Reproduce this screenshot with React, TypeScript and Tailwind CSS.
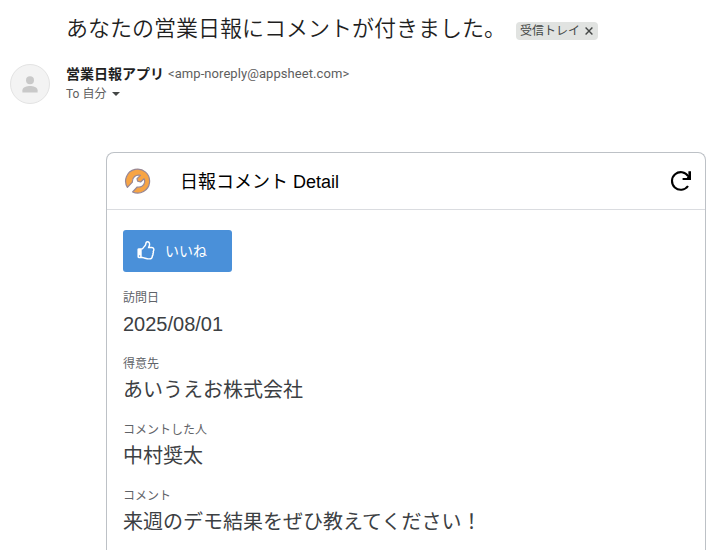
import React from "react";

interface FieldProps {
  label: string;
  value: string;
}

const fields: FieldProps[] = [
  { label: "訪問日", value: "2025/08/01" },
  { label: "得意先", value: "あいうえお株式会社" },
  { label: "コメントした人", value: "中村奨太" },
  { label: "コメント", value: "来週のデモ結果をぜひ教えてください！" },
];

const Avatar: React.FC = () => (
  <div className="flex size-10 shrink-0 items-center justify-center rounded-full border border-[#e3e3e3] bg-[#f3f3f3]">
    <svg width="16" height="17" viewBox="0 0 16 17" fill="#c9c9c9">
      <circle cx="8" cy="4.2" r="4" />
      <path d="M0.4 16.6v-2.3c0-2.9 4.6-4.2 7.6-4.2s7.6 1.3 7.6 4.2v2.3z" />
    </svg>
  </div>
);

const AppLogo: React.FC = () => (
  <svg width="28" height="28" viewBox="0 0 28 28" className="shrink-0">
    <path
      d="M3.4 20.4A12 12 0 1 1 8.6 25L13.2 20C16.6 20.8 20 18.8 20.6 15.4C20.8 14 20.6 12.8 20.1 11.8L16.6 15L13.6 14.2L13 11.6L16.4 8.4C12 7.2 8 10.4 8.4 15.2Z"
      fill="#f7a444"
      stroke="#988795"
      strokeWidth="1.2"
      strokeLinejoin="round"
    />
  </svg>
);

const ThumbsUpIcon: React.FC = () => (
  <svg
    width="20"
    height="20"
    viewBox="0 0 1792 1792"
    fill="currentColor"
    className="mr-[9px] shrink-0"
  >
    <path d="M384 1344q0-26-19-45t-45-19-45 19-19 45 19 45 45 19 45-19 19-45zm1152-576q0-51-39-89.500t-89-38.500h-352q0-58 48-159.500t48-160.500q0-98-32-145t-128-47q-26 26-38 85t-30.500 125.500-59.500 109.500q-22 23-77 91-4 5-23 30t-31.500 41-34.500 42.500-40 44-38.500 35.500-40 27-35.500 9h-32v640h32q13 0 31.500 3t33 6.500 38 11 35 11.500 35.500 12.500 29 10.500q211 73 342 73h121q192 0 192-167 0-26-5-56 30-16 47.500-52.500t17.500-73.500-18-69q53-50 53-119 0-25-10-55.500t-25-47.500q32-1 53.500-47t21.500-81zm128-1q0 89-49 163 9 33 9 69 0 77-38 144 3 21 3 43 0 101-60 178 1 139-85 219.500t-227 80.500h-129q-96 0-189.500-22.500t-216.500-65.500q-116-40-138-40h-288q-53 0-90.500-37.500t-37.500-90.500v-640q0-53 37.500-90.500t90.500-37.500h274q36-24 137-155 58-75 107-128 24-25 35.500-85.500t30.500-126.500 62-108q39-37 90-37 84 0 151 32.500t102 101.500 35 186q0 93-48 192h176q104 0 180 76t76 179z" />
  </svg>
);

const RefreshIcon: React.FC = () => (
  <svg width="22" height="22" viewBox="0 0 22 22" fill="none">
    <path
      d="M18 16A8.8 8.8 0 1 1 18.2 6.2"
      stroke="#000"
      strokeWidth="2.1"
    />
    <path d="M21 1.2v8.8h-8.4V8h4.2l1.6-3V1.2z" fill="#000" />
  </svg>
);

const Field: React.FC<FieldProps> = ({ label, value }) => (
  <div className="h-[66px]">
    <div className="text-xs leading-4 text-[#5f6368]">{label}</div>
    <div className="mt-0.5 text-xl leading-8 text-[#3c4043]">{value}</div>
  </div>
);

export default function App() {
  return (
    <div className="h-[550px] w-[716px] overflow-hidden bg-white font-['Liberation_Sans','Noto_Sans_CJK_JP',sans-serif]">
      <div className="flex h-[60px] items-center pl-[66px]">
        <h1 className="mb-0.5 w-[450px] text-[22px] leading-7 font-[350] whitespace-nowrap text-[#1f1f1f]">
          あなたの営業日報にコメントが付きました。
        </h1>
        <span className="mt-0.5 flex h-[18px] w-[82px] items-center justify-between rounded bg-[#e1e3e1] pr-[5px] pl-1 text-xs leading-[18px] whitespace-nowrap text-[#444746]">
          受信トレイ
          <svg width="8" height="8" viewBox="0 0 8 8" stroke="#444746" strokeWidth="1.4">
            <path d="M0.6 0.6l6.8 6.8M7.4 0.6L0.6 7.4" />
          </svg>
        </span>
      </div>

      <div className="flex h-[92px] items-start gap-4 pt-1 pl-2.5">
        <Avatar />
        <div className="font-['Roboto','Noto_Sans_CJK_JP',sans-serif]">
          <div className="flex h-5 items-center gap-1 whitespace-nowrap">
            <span className="text-sm leading-5 font-bold text-[#1f1f1f]">
              営業日報アプリ
            </span>
            <span className="text-[13px] leading-5 tracking-[0.07px] text-[#5e5e5e]">
              &lt;amp-noreply@appsheet.com&gt;
            </span>
          </div>
          <div className="flex h-5 items-center text-xs text-[#5e5e5e]">
            To 自分
            <svg width="8" height="4" viewBox="0 0 8 4" className="ml-1.5" fill="#444746">
              <path d="M0 0h8L4 4z" />
            </svg>
          </div>
        </div>
      </div>

      <div className="ml-[106px] h-[420px] w-[600px] rounded-t-lg border border-b-0 border-[#bdc1c6]">
        <div className="flex h-[57px] items-center border-b border-[#dadce0] pr-[13px] pl-[17px]">
          <AppLogo />
          <h2 className="mt-0.5 ml-7 flex-1 text-lg leading-6 text-black">
            日報コメント Detail
          </h2>
          <RefreshIcon />
        </div>
        <div className="px-4 pt-5">
          <button className="flex h-[42px] w-[109px] items-center rounded-[3px] bg-[#4a90d9] pl-[13px] text-sm text-white">
            <ThumbsUpIcon />
            いいね
          </button>
          <div className="pt-[18px]">
            {fields.map((field) => (
              <Field key={field.label} label={field.label} value={field.value} />
            ))}
          </div>
        </div>
      </div>
    </div>
  );
}
